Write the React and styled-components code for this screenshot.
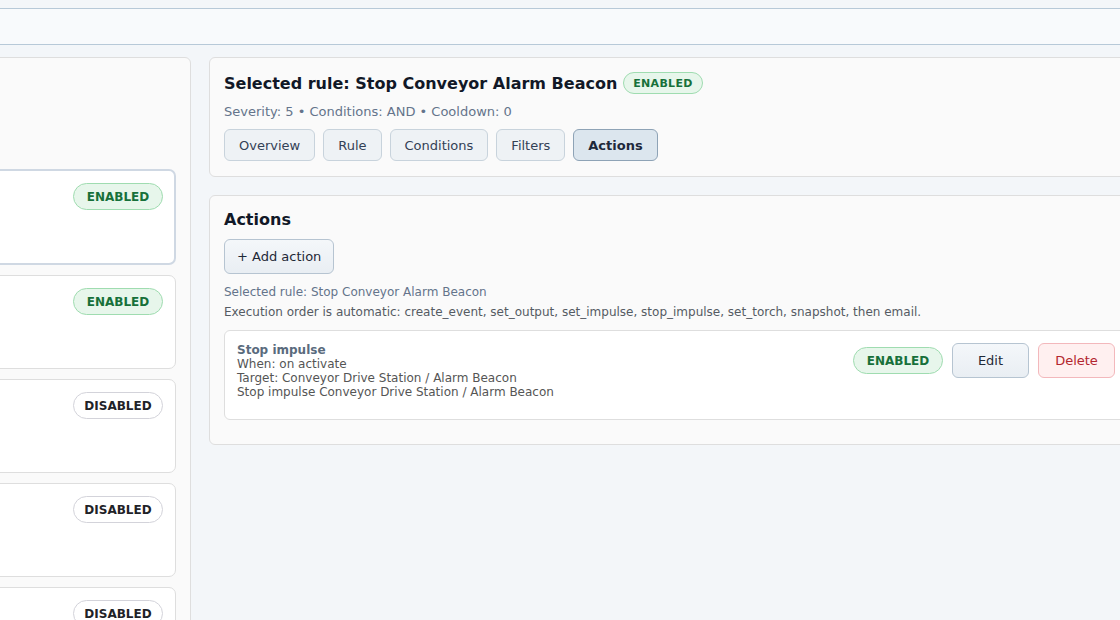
import styled, { createGlobalStyle } from "styled-components";

const GlobalStyle = createGlobalStyle`
  html, body {
    margin: 0;
    padding: 0;
    background: #f3f6f9;
    font-family: "DejaVu Sans", "Liberation Sans", sans-serif;
    color: #1f2937;
    overflow: hidden;
  }
`;

const Page = styled.div`
  padding-top: 8px;
  min-height: 100vh;
`;

const TopBar = styled.header`
  height: 35px;
  background: #f8fafc;
  border-top: 1px solid #b7c9d8;
  border-bottom: 1px solid #b7c9d8;
`;

const Layout = styled.main`
  display: grid;
  grid-template-columns: 381px 934px;
  gap: 18px;
  align-items: start;
  padding-top: 12px;
  margin-left: -190px;
`;

const Panel = styled.section`
  background: #fafafa;
  border: 1px solid #dedede;
  border-radius: 6px;
  padding: 14px;
`;

const Sidebar = styled(Panel)`
  min-height: 700px;
  display: flex;
  flex-direction: column;
  gap: 10px;
`;

const SideHead = styled.div`
  height: 86px;
  margin-bottom: 1px;
`;

const SideTitle = styled.h2`
  margin: 0 0 6px;
  font-size: 16px;
  font-weight: bold;
  color: #111827;
`;

const SideNote = styled.div`
  font-size: 12px;
  color: #64748b;
  width: 160px;
`;

const RuleCard = styled.div`
  display: flex;
  justify-content: space-between;
  align-items: flex-start;
  background: #fff;
  border: ${(p) => (p.selected ? "2px solid #cfd8e3" : "1px solid #dedede")};
  border-radius: 7px;
  padding: ${(p) => (p.selected ? "12px 11px" : "12px 12px")};
  height: ${(p) => (p.selected ? "96px" : "94px")};
  box-sizing: border-box;
`;

const RuleText = styled.div`
  font-size: 12px;
  color: #475569;
  width: 160px;
  line-height: 16px;

  b {
    display: block;
    color: #111827;
    font-size: 13px;
  }
`;

const Badge = styled.span`
  display: inline-flex;
  align-items: center;
  justify-content: center;
  box-sizing: border-box;
  height: ${(p) => (p.small ? "22px" : "27px")};
  min-width: ${(p) => (p.small ? "0" : "90px")};
  padding: ${(p) => (p.small ? "0 9px" : "0 10px")};
  border-radius: 999px;
  font-size: ${(p) => (p.small ? "11px" : "12px")};
  font-weight: bold;
  letter-spacing: ${(p) => (p.small ? "0.3px" : "0")};
  white-space: nowrap;
  color: ${(p) => (p.on ? "#17703a" : "#1f2328")};
  background: ${(p) => (p.on ? "#e7f6eb" : "#ffffff")};
  border: 1px solid ${(p) => (p.on ? "#9fdcb0" : "#d3d3da")};
`;

const Main = styled.div`
  display: flex;
  flex-direction: column;
  gap: 18px;
`;

const HeaderPanel = styled(Panel)`
  padding-bottom: 15px;
`;

const TitleRow = styled.div`
  display: flex;
  align-items: center;
  gap: 6px;
  height: 22px;
`;

const Title = styled.h1`
  margin: 0;
  font-size: 16px;
  font-weight: bold;
  color: #111827;
`;

const Meta = styled.div`
  margin-top: 9px;
  font-size: 13px;
  line-height: 18px;
  color: #64748b;
`;

const Tabs = styled.div`
  display: flex;
  gap: 8px;
  margin-top: 8px;
`;

const Tab = styled.button`
  height: 32px;
  padding: 0 14px;
  border-radius: 6px;
  font-family: inherit;
  font-size: 13px;
  font-weight: ${(p) => (p.active ? "bold" : "normal")};
  color: ${(p) => (p.active ? "#1e293b" : "#334155")};
  background: ${(p) => (p.active ? "#dce6ee" : "#eef2f5")};
  border: 1px solid ${(p) => (p.active ? "#8ea3b6" : "#c8d3dc")};
`;

const Heading = styled.h2`
  margin: 0;
  font-size: 16px;
  line-height: 20px;
  font-weight: bold;
  color: #111827;
`;

const Button = styled.button`
  height: 35px;
  min-width: ${(p) => p.$w || "0"};
  padding: 0 12px;
  border-radius: 6px;
  font-family: inherit;
  font-size: 13px;
  color: #1f2937;
  background: linear-gradient(#f4f7fa, #e9eef3);
  border: 1px solid #b6c4d1;
  white-space: nowrap;
`;

const DangerButton = styled(Button)`
  color: #b3262e;
  background: #fff0f0;
  border-color: #f3b8bc;
`;

const AddButton = styled(Button)`
  margin-top: 9px;
  align-self: flex-start;
`;

const Hint = styled.div`
  font-size: 12px;
  line-height: 16px;
  color: ${(p) => (p.muted ? "#555b63" : "#64748b")};
  margin-top: ${(p) => p.gap || "0"};
`;

const ActionsPanel = styled(Panel)`
  display: flex;
  flex-direction: column;
  padding-bottom: 24px;
`;

const ActionItem = styled.div`
  margin-top: 10px;
  display: flex;
  justify-content: space-between;
  align-items: flex-start;
  background: #fff;
  border: 1px solid #dedede;
  border-radius: 6px;
  padding: 12px 12px 0;
  height: 90px;
  box-sizing: border-box;
`;

const ActionBody = styled.div`
  font-size: 12px;
  line-height: 14px;
  color: #555;

  strong {
    display: block;
    color: #5a6b7d;
  }
`;

const ActionControls = styled.div`
  display: flex;
  align-items: center;
  gap: 9px;
`;

const rules = [
  { name: "Stop Conveyor Alarm Beacon", sev: 5, on: true, selected: true },
  { name: "Conveyor Overload Stop", sev: 4, on: true },
  { name: "Torch Idle Timeout", sev: 2, on: false },
  { name: "Camera Snapshot on Fault", sev: 3, on: false },
  { name: "Night Shift Email Digest", sev: 1, on: false },
  { name: "Beacon Test Pulse", sev: 1, on: false },
];

export default function App() {
  return (
    <Page>
      <GlobalStyle />
      <TopBar />
      <Layout>
        <Sidebar>
          <SideHead>
            <SideTitle>Rules</SideTitle>
            <SideNote>6 rules configured</SideNote>
          </SideHead>
          {rules.map((r) => (
            <RuleCard key={r.name} selected={r.selected}>
              <RuleText>
                <b>{r.name}</b>
                Severity: {r.sev}
              </RuleText>
              <Badge on={r.on}>{r.on ? "ENABLED" : "DISABLED"}</Badge>
            </RuleCard>
          ))}
        </Sidebar>

        <Main>
          <HeaderPanel>
            <TitleRow>
              <Title>Selected rule: Stop Conveyor Alarm Beacon</Title>
              <Badge on small>
                ENABLED
              </Badge>
            </TitleRow>
            <Meta>Severity: 5 • Conditions: AND • Cooldown: 0</Meta>
            <Tabs>
              <Tab>Overview</Tab>
              <Tab>Rule</Tab>
              <Tab>Conditions</Tab>
              <Tab>Filters</Tab>
              <Tab active>Actions</Tab>
            </Tabs>
          </HeaderPanel>

          <ActionsPanel>
            <Heading>Actions</Heading>
            <AddButton>+ Add action</AddButton>
            <Hint gap="10px">Selected rule: Stop Conveyor Alarm Beacon</Hint>
            <Hint muted gap="4px">
              Execution order is automatic: create_event, set_output, set_impulse,
              stop_impulse, set_torch, snapshot, then email.
            </Hint>
            <ActionItem>
              <ActionBody>
                <strong>Stop impulse</strong>
                When: on activate
                <br />
                Target: Conveyor Drive Station / Alarm Beacon
                <br />
                Stop impulse Conveyor Drive Station / Alarm Beacon
              </ActionBody>
              <ActionControls>
                <Badge on>ENABLED</Badge>
                <Button $w="77px">Edit</Button>
                <DangerButton $w="77px">Delete</DangerButton>
              </ActionControls>
            </ActionItem>
          </ActionsPanel>
        </Main>
      </Layout>
    </Page>
  );
}
